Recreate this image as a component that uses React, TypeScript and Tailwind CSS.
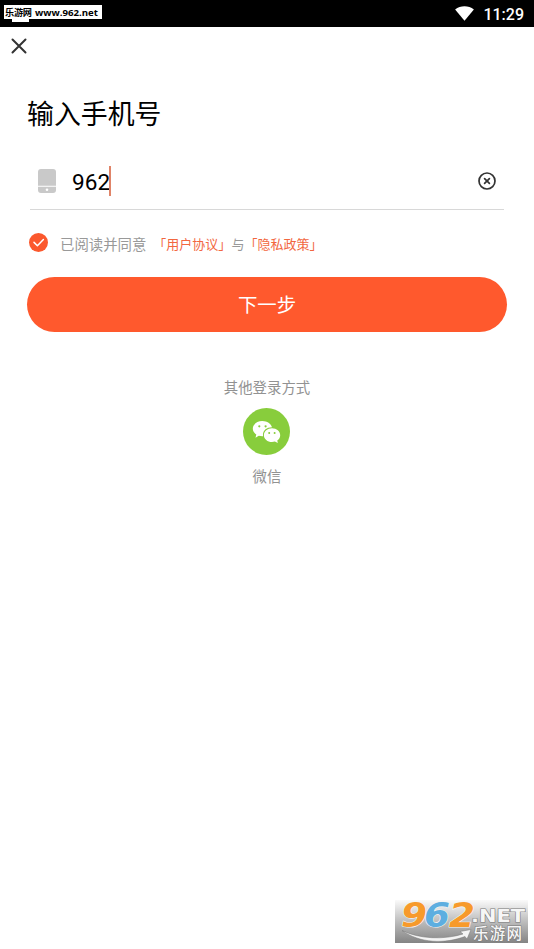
function StatusBar() {
  return (
    <header className="relative flex h-[27px] items-center justify-end bg-black pr-[10px] text-white">
      <div className="absolute left-[12px] top-[14px] h-2 w-[17px] bg-white" />
      <div className="absolute left-1 top-[5px] h-[14px] w-[98px] bg-white">
        <svg className="block" width="98" height="14" viewBox="0 0 98 14" fill="#000" fontWeight="700">
          <text x="1" y="11" fontSize="9.2" textLength="27">
            乐游网
          </text>
          <text x="31" y="11" fontSize="9.5" textLength="63" lengthAdjust="spacingAndGlyphs" fontFamily="Open Sans">
            www.962.net
          </text>
        </svg>
      </div>
      <svg className="mr-[9px]" width="19" height="15" viewBox="0 0 20 16" fill="currentColor">
        <path d="M0 3.6C5.8-.9 14.2-.9 20 3.6L10 15.8z" />
      </svg>
      <span className="mt-[3px] text-[16px] leading-5 font-medium">11:29</span>
    </header>
  );
}

function PhoneField() {
  return (
    <div className="mx-[30px] flex h-[57px] items-center border-b border-[#d8d8d8] pl-2 pr-2">
      <svg width="18" height="24" viewBox="0 0 18 24" fill="#c9c9c9">
        <path d="M3 0h12a3 3 0 0 1 3 3v13.7H0V3a3 3 0 0 1 3-3z" />
        <path d="M0 17.7h18V21a3 3 0 0 1-3 3H3a3 3 0 0 1-3-3z" />
        <circle cx="9" cy="20.7" r="1.3" fill="#fff" />
      </svg>
      <span className="ml-4 mt-[3px] text-[22.6px] leading-[30px] text-black">962</span>
      <span className="-ml-px h-[30px] w-[2px] bg-[#e08468]" />
      <svg
        className="ml-auto"
        width="18"
        height="18"
        viewBox="0 0 18 18"
        fill="none"
        stroke="#333"
        strokeWidth="1.7"
        strokeLinecap="round"
      >
        <circle cx="9" cy="9" r="8" />
        <path d="m6.6 6.6 4.8 4.8m0-4.8-4.8 4.8" />
      </svg>
    </div>
  );
}

function PolicyLink({ title }: { title: string }) {
  return <span className="text-[#f2673f]">{`「${title}」`}</span>;
}

function Agreement() {
  return (
    <div className="ml-[29px] mt-[23px] flex h-5 items-center whitespace-nowrap text-[#999]">
      <svg className="-mt-px" width="19" height="19" viewBox="0 0 19 19" fill="none">
        <circle cx="9.5" cy="9.5" r="9.5" fill="#fb582d" />
        <path d="m5 9.4 3.4 3.4 6-6.2" stroke="#fff" strokeWidth="1.5" strokeLinecap="round" strokeLinejoin="round" />
      </svg>
      <span className="ml-3 mt-[5px] text-[14.4px] leading-5">已阅读并同意</span>
      <span className="ml-[7px] mt-[3px] text-[13px] leading-5">
        <PolicyLink title="用户协议" />与<PolicyLink title="隐私政策" />
      </span>
    </div>
  );
}

function WeChatLogin() {
  return (
    <section className="mt-[46px] flex flex-col items-center text-[14.4px] leading-[22px] text-[#929292]">
      <p>其他登录方式</p>
      <svg className="mr-px mt-2" width="47" height="47" viewBox="0 0 47 47">
        <circle cx="23.5" cy="23.5" r="23.5" fill="#88cd3c" />
        <path
          d="M19.3 13c-5.3 0-9.5 3.4-9.5 7.6 0 2.4 1.3 4.5 3.5 5.9l-.8 3.2 3.3-1.9c1.1.3 2.3.5 3.5.5h.8c-1-5.2 3.2-9 8.9-9-.9-3.5-4.9-6.3-9.7-6.3z"
          fill="#fff"
        />
        <path
          d="M29 20.2c4.6 0 8.2 3.1 8.2 7 0 2.2-1.1 4.1-2.9 5.3l.5 2.6-2.9-1.5c-.9.3-1.9.4-2.9.4-4.5 0-8.1-3-8.1-6.8s3.6-7 8.1-7z"
          fill="#fff"
        />
        <g fill="#88cd3c">
          <circle cx="16.3" cy="18.3" r="1.1" />
          <circle cx="22.6" cy="18.3" r="1.1" />
          <circle cx="26.2" cy="25" r="1" />
          <circle cx="31.6" cy="25" r="1" />
        </g>
      </svg>
      <p className="mt-3">微信</p>
    </section>
  );
}

function SiteBadge() {
  return (
    <svg className="absolute left-[395px] top-[888px]" width="133" height="55" viewBox="0 -12 133 55">
      <defs>
        <linearGradient id="badge-bg" x1="0" y1="0" x2="0" y2="1">
          <stop offset="0" stopColor="#fafafa" />
          <stop offset="0.5" stopColor="#bdbdbd" />
          <stop offset="1" stopColor="#848484" />
        </linearGradient>
      </defs>
      <rect width="133" height="43" fill="url(#badge-bg)" />
      <g fontFamily="DejaVu Sans" fontWeight="700" fontStyle="italic" fontSize="33" stroke="#f4f4f4" strokeWidth="1.2" paintOrder="stroke">
        <text x="6" y="27" textLength="26" lengthAdjust="spacingAndGlyphs" fill="#f79a2b">
          9
        </text>
        <text x="29" y="27" textLength="26" lengthAdjust="spacingAndGlyphs" fill="#5daee0">
          6
        </text>
        <text x="54" y="27" textLength="26" lengthAdjust="spacingAndGlyphs" fill="#f79a2b">
          2
        </text>
      </g>
      <path
        d="M7 30.5c17 8.5 42 9.500 61 3.500l-3-2.500 11-2-4 9.500-2-2.500c-20 7.500-45 7-63-6z"
        fill="#f4f4f4"
        stroke="#777"
        strokeWidth=".5"
      />
      <g fill="#f6f6f6" stroke="#777" strokeWidth="1" paintOrder="stroke">
        <text x="76" y="21.5" fontFamily="DejaVu Sans" fontWeight="700" fontSize="17" textLength="54" lengthAdjust="spacingAndGlyphs">
          .NET
        </text>
        <text x="78" y="38.5" fontWeight="500" fontSize="15.5" textLength="49">
          乐游网
        </text>
      </g>
    </svg>
  );
}

export default function App() {
  return (
    <div className="relative h-[949px] w-[534px] overflow-hidden bg-white font-['Roboto','Noto_Sans_CJK_SC',sans-serif]">
      <StatusBar />
      <main>
        <nav className="flex h-[38px] items-center pl-[11px]">
          <svg width="16" height="16" viewBox="0 0 16 16" stroke="#333" strokeWidth="2" strokeLinecap="round">
            <path d="m1.5 1.5 13 13m0-13-13 13" />
          </svg>
        </nav>
        <h1 className="ml-[27px] mt-[30px] text-[26.9px] leading-10 text-black">输入手机号</h1>
        <div className="h-[18px]" />
        <PhoneField />
        <Agreement />
        <button className="mx-[27px] mt-6 block h-[55px] w-[480px] rounded-full bg-[#ff592d] pt-[2px] text-[19.4px] text-white">
          下一步
        </button>
        <WeChatLogin />
      </main>
      <SiteBadge />
    </div>
  );
}
